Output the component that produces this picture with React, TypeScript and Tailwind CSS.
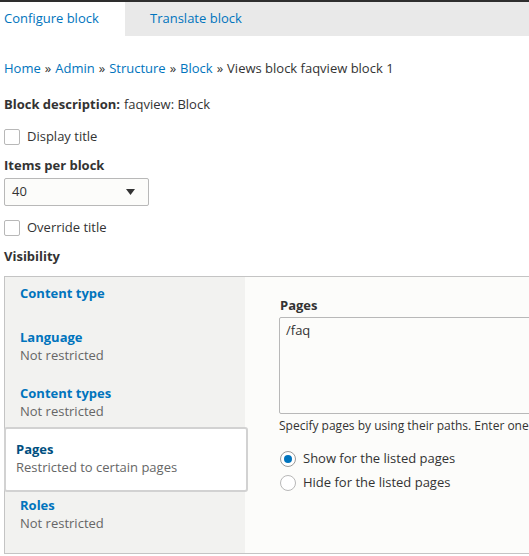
import React from "react";

const font = { fontFamily: '"Open Sans", "Noto Sans", sans-serif' };

function Checkbox({ label }: { label: string }) {
  return (
    <div className="flex items-center h-[16px] gap-[7px]">
      <span className="w-[16px] h-[16px] border border-[#b8b8b8] rounded-[2px] bg-white shrink-0" />
      <span className="text-[13px] text-[#333]">{label}</span>
    </div>
  );
}

function Radio({ label, checked }: { label: string; checked?: boolean }) {
  return (
    <div className="flex items-center gap-[7px] h-[16px]">
      <span
        className={
          "w-[16px] h-[16px] rounded-full border shrink-0 flex items-center justify-center bg-white " +
          (checked ? "border-[#9a9a9a]" : "border-[#b8b8b8]")
        }
      >
        {checked && <span className="w-[8px] h-[8px] rounded-full bg-[#0074bd]" />}
      </span>
      <span className="text-[13px] text-[#333]">{label}</span>
    </div>
  );
}

export default function App() {
  return (
    <div className="w-[529px] h-[556px] overflow-hidden bg-white text-[#333]" style={font}>
      <div className="h-[2px] bg-[#2e2e2e]" />
      <div className="flex h-[34px] bg-[#e9e9e9]">
        <div className="w-[125px] bg-white flex items-center pl-[4px] text-[13px] text-[#0074bd]">
          Configure block
        </div>
        <div className="flex items-center pl-[25px] text-[13px] text-[#0074bd]">Translate block</div>
      </div>

      <div className="px-[4px]">
        <div className="mt-[24px] h-[18px] flex items-center text-[13px]">
          <span className="text-[#0074bd]">Home</span>
          <span className="mx-[4px]">»</span>
          <span className="text-[#0074bd]">Admin</span>
          <span className="mx-[4px]">»</span>
          <span className="text-[#0074bd]">Structure</span>
          <span className="mx-[4px]">»</span>
          <span className="text-[#0074bd]">Block</span>
          <span className="mx-[4px]">»</span>
          <span>Views block faqview block 1</span>
        </div>

        <div className="mt-[18px] h-[18px] flex items-center text-[13px]">
          <span className="font-bold">Block description:</span>
          <span className="ml-[4px]">faqview: Block</span>
        </div>

        <div className="mt-[15px]">
          <Checkbox label="Display title" />
        </div>

        <div className="mt-[12px] h-[18px] flex items-center text-[13px] font-bold">Items per block</div>

        <div className="mt-[3px] w-[145px] h-[28px] border border-[#b8b8b8] rounded-[2px] flex items-center justify-between pl-[7px] pr-[13px] bg-[#fcfcfa]">
          <span className="text-[13px]">40</span>
          <svg width="9" height="6" viewBox="0 0 9 6">
            <path d="M0 0 H9 L4.5 6 Z" fill="#333" />
          </svg>
        </div>

        <div className="mt-[14px]">
          <Checkbox label="Override title" />
        </div>

        <div className="mt-[12px] h-[18px] flex items-center text-[13px] font-bold">Visibility</div>

        <div className="mt-[10px] w-[700px] h-[278px] border border-[#c4c4c4] flex">
          <div className="w-[240px] bg-[#f2f2f0] flex flex-col relative z-10 text-[13px] leading-[18px]">
            <div className="h-[51px] px-[15px] pt-[7px]">
              <div className="font-bold text-[#0074bd]">Content type</div>
            </div>
            <div className="h-[56px] px-[15px]">
              <div className="font-bold text-[#0074bd]">Language</div>
              <div className="text-[#666]">Not restricted</div>
            </div>
            <div className="h-[43px] px-[15px]">
              <div className="font-bold text-[#0074bd]">Content types</div>
              <div className="text-[#666]">Not restricted</div>
            </div>
            <div className="h-[65px] bg-white border-2 border-[#d2d2d2] rounded-[3px] mr-[-3px] ml-[-1px] px-[10px] pt-[11px]">
              <div className="font-bold text-[#004f80]">Pages</div>
              <div className="text-[#666]">Restricted to certain pages</div>
            </div>
            <div className="px-[15px] pt-[4px]">
              <div className="font-bold text-[#0074bd]">Roles</div>
              <div className="text-[#666]">Not restricted</div>
            </div>
          </div>
          <div className="flex-1 bg-[#fcfcfa] pl-[34px] pt-[19px]">
            <div className="text-[13px] font-bold leading-[18px] ml-[1px]">Pages</div>
            <div className="mt-[3px] h-[97px] border border-[#b8b8b8] rounded-[2px] bg-[#fcfcfa] px-[6px] pt-[3px] text-[13px] leading-[18px]">
              /faq
            </div>
            <div className="mt-[4px] text-[12px] leading-[16px] text-[#333] whitespace-nowrap">
              Specify pages by using their paths. Enter one
            </div>
            <div className="mt-[17px] flex flex-col gap-[8px] ml-[1px]">
              <Radio label="Show for the listed pages" checked />
              <Radio label="Hide for the listed pages" />
            </div>
          </div>
        </div>
      </div>
    </div>
  );
}
